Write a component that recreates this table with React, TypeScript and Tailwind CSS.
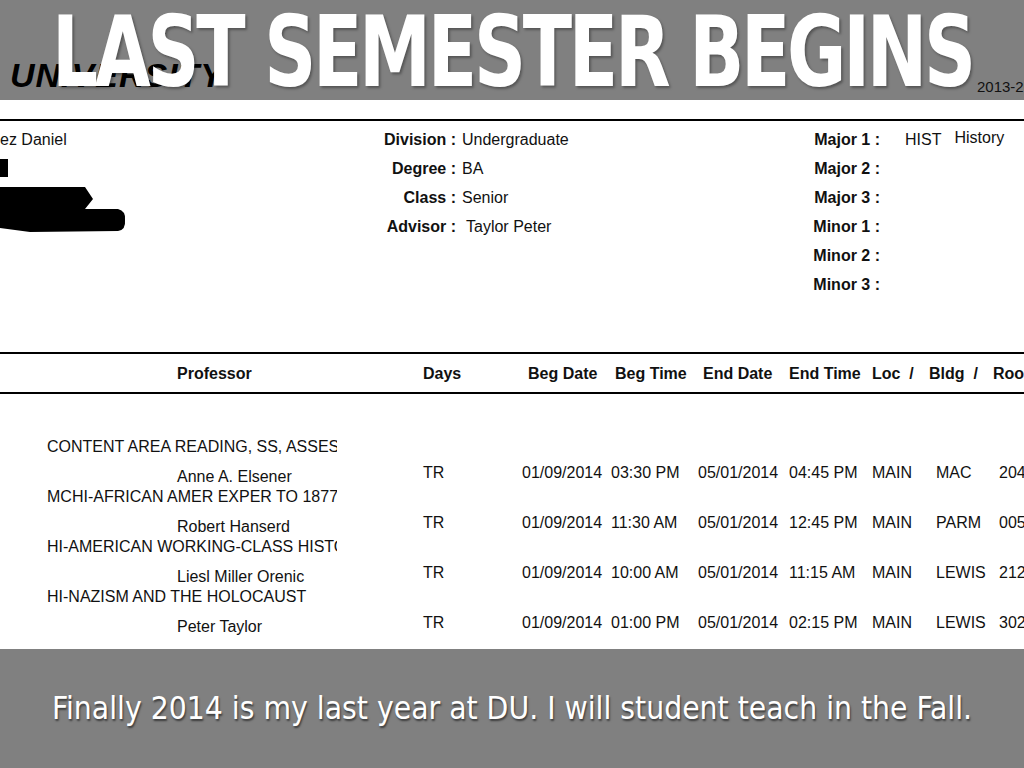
const info = [
  ["Division :", "Undergraduate", "Major 1 :"],
  ["Degree :", "BA", "Major 2 :"],
  ["Class :", "Senior", "Major 3 :"],
  ["Advisor :", "Taylor Peter", "Minor 1 :"],
  ["", "", "Minor 2 :"],
  ["", "", "Minor 3 :"],
];

const courses = [
  {
    title: "CONTENT AREA READING, SS, ASSESSMENT",
    prof: "Anne A. Elsener",
    begTime: "03:30 PM",
    endTime: "04:45 PM",
    bldg: "MAC",
    room: "2040",
  },
  {
    title: "MCHI-AFRICAN AMER EXPER TO 1877",
    prof: "Robert Hanserd",
    begTime: "11:30 AM",
    endTime: "12:45 PM",
    bldg: "PARM",
    room: "0050",
  },
  {
    title: "HI-AMERICAN WORKING-CLASS HISTORY",
    prof: "Liesl Miller Orenic",
    begTime: "10:00 AM",
    endTime: "11:15 AM",
    bldg: "LEWIS",
    room: "2120",
  },
  {
    title: "HI-NAZISM AND THE HOLOCAUST",
    prof: "Peter Taylor",
    begTime: "01:00 PM",
    endTime: "02:15 PM",
    bldg: "LEWIS",
    room: "3020",
  },
];

const Redaction = () => (
  <svg width="130" height="80" viewBox="0 0 130 80" className="block">
    <rect x="0" y="5" width="8" height="18" fill="#000" />
    <path
      d="M0 33 L85 33 L93 45 L85 55 L118 55 Q126 57 125 66 Q126 76 118 77 L30 78 L0 74 Z"
      fill="#000"
    />
  </svg>
);

export default function App() {
  return (
    <div className="w-[1024px] h-[768px] flex flex-col overflow-hidden bg-white">
      {/* top band */}
      <div className="h-[100px] shrink-0 bg-[#808080] grid grid-cols-[minmax(0,1fr)] overflow-hidden">
        <div className="col-start-1 row-start-1 flex items-end whitespace-nowrap overflow-hidden">
          <div className="w-[977px] shrink-0 pl-[10px] pb-[9px] font-['Liberation_Sans',sans-serif] text-[34px] leading-none font-bold italic tracking-[1px] text-black">
            UNIVERSITY
          </div>
          <div className="shrink-0 pb-[7px] font-['Liberation_Sans',sans-serif] text-[15px] leading-none text-[#111]">
            2013-2014
          </div>
        </div>
        <div className="col-start-1 row-start-1 flex justify-center pt-[3px]">
          <h1 className="shrink-0 scale-x-[0.82] font-['DejaVu_Sans_Condensed',sans-serif] text-[98px] leading-none font-bold text-white tracking-[-4px] whitespace-nowrap [text-shadow:2px_2px_3px_rgba(0,0,0,0.35)]">
            LAST SEMESTER BEGINS
          </h1>
        </div>
      </div>

      {/* document */}
      <div className="flex-1 overflow-hidden font-['Liberation_Sans',Arial,sans-serif] text-[16px] text-[#111] whitespace-nowrap">
        <div className="pt-[19px]">
          <div className="h-[2px] bg-black" />
        </div>

        <div className="flex pt-[4px]">
          <div className="w-[370px] shrink-0 flex flex-col">
            <div className="h-[29px] leading-[29px]">ez Daniel</div>
            <Redaction />
          </div>
          <div className="w-[410px] shrink-0 flex flex-col">
            {info.map((r, i) => (
              <div key={i} className="h-[29px] leading-[29px] flex">
                <span className="w-[86px] shrink-0 text-right font-bold">{r[0]}</span>
                <span className={r[0] === "Advisor :" ? "pl-[10px]" : "pl-[6px]"}>{r[1]}</span>
              </div>
            ))}
          </div>
          <div className="flex-1 flex flex-col">
            {info.map((r, i) => (
              <div key={i} className="h-[29px] leading-[29px] flex">
                <span className="w-[100px] shrink-0 text-right font-bold">{r[2]}</span>
                {i === 0 && (
                  <>
                    <span className="pl-[25px]">HIST</span>
                    <span className="pl-[13px] -mt-[2px]">History</span>
                  </>
                )}
              </div>
            ))}
          </div>
        </div>

        {/* table header */}
        <div className="mt-[53px] h-[2px] bg-black" />
        <div className="h-[38px] leading-[39px] flex font-bold">
          <span className="shrink-0 pl-[177px] w-[423px]">Professor</span>
          <span className="shrink-0 w-[105px]">Days</span>
          <span className="shrink-0 w-[87px]">Beg Date</span>
          <span className="shrink-0 w-[88px]">Beg Time</span>
          <span className="shrink-0 w-[86px]">End Date</span>
          <span className="shrink-0 w-[83px]">End Time</span>
          <span className="shrink-0 w-[57px] whitespace-pre">Loc  /</span>
          <span className="shrink-0 w-[64px] whitespace-pre">Bldg  /</span>
          <span className="shrink-0">Room</span>
        </div>
        <div className="h-[2px] bg-black" />

        {/* courses */}
        <div className="mt-[41px] flex flex-col">
          {courses.map((c) => (
            <div key={c.prof} className="h-[50px] flex flex-col">
              <div className="h-[25px] leading-[24px] pl-[47px]">
                <div className="w-[290px] overflow-hidden">{c.title}</div>
              </div>
              <div className="h-[25px] leading-[25px] flex">
                <span className="shrink-0 pl-[177px] w-[423px] pt-[4px]">{c.prof}</span>
                <span className="shrink-0 w-[99px]">TR</span>
                <span className="shrink-0 w-[89px]">01/09/2014</span>
                <span className="shrink-0 w-[87px]">{c.begTime}</span>
                <span className="shrink-0 w-[91px]">05/01/2014</span>
                <span className="shrink-0 w-[83px]">{c.endTime}</span>
                <span className="shrink-0 w-[64px]">MAIN</span>
                <span className="shrink-0 w-[63px]">{c.bldg}</span>
                <span className="shrink-0">{c.room}</span>
              </div>
            </div>
          ))}
        </div>
      </div>

      {/* bottom band */}
      <div className="h-[119px] shrink-0 bg-[#808080] flex items-center justify-center">
        <p className="font-['DejaVu_Sans_Condensed',sans-serif] text-[31.5px] leading-none text-white whitespace-nowrap [text-shadow:1px_2px_2px_rgba(0,0,0,0.55)]">
          Finally 2014 is my last year at DU. I will student teach in the Fall.
        </p>
      </div>
    </div>
  );
}
